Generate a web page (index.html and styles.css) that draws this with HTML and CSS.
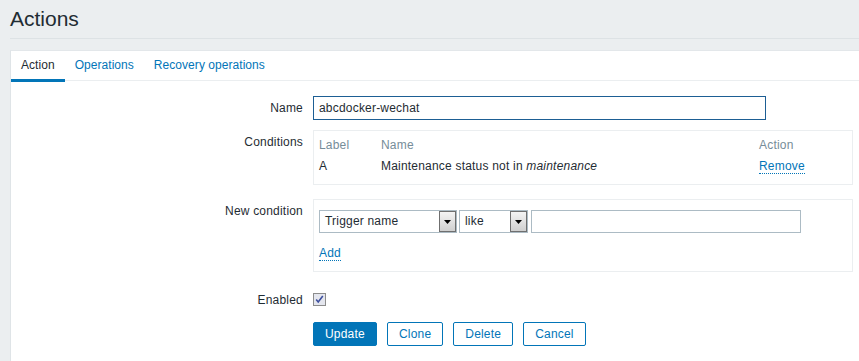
FILE: index.html
```html
<!DOCTYPE html>
<html>
<head>
<meta charset="utf-8">
<link rel="stylesheet" href="styles.css">
</head>
<body>
<header class="header"><h1 class="title">Actions</h1></header>
<main class="panel">
  <nav class="tabs">
    <span class="tab tab-active">Action</span>
    <span class="tab">Operations</span>
    <span class="tab">Recovery operations</span>
  </nav>
  <form class="form">
    <div class="row row-name">
      <label class="label">Name</label>
      <div class="field"><div class="text-input text-input-focus">abcdocker-wechat</div></div>
    </div>
    <div class="row row-cond">
      <label class="label">Conditions</label>
      <div class="field">
        <div class="box box-cond">
          <div class="cond-head">
            <span class="c-label">Label</span><span class="c-name">Name</span><span class="c-action">Action</span>
          </div>
          <div class="cond-row">
            <span class="c-label">A</span><span class="c-name">Maintenance status not in <em>maintenance</em></span><span class="c-action"><span class="link">Remove</span></span>
          </div>
        </div>
      </div>
    </div>
    <div class="row row-new">
      <label class="label">New condition</label>
      <div class="field">
        <div class="box box-new">
          <div class="new-line">
            <div class="select select-trigger"><span class="select-text">Trigger name</span><span class="select-btn"><svg width="7" height="4" viewBox="0 0 7 4"><path d="M0 0h7L3.5 4z" fill="#000"/></svg></span></div>
            <div class="select select-like"><span class="select-text">like</span><span class="select-btn"><svg width="7" height="4" viewBox="0 0 7 4"><path d="M0 0h7L3.5 4z" fill="#000"/></svg></span></div>
            <div class="text-input text-input-value"></div>
          </div>
          <div class="add-line"><span class="link">Add</span></div>
        </div>
      </div>
    </div>
    <div class="row row-enabled">
      <label class="label">Enabled</label>
      <div class="field">
        <span class="checkbox"><svg width="13" height="13" viewBox="0 0 13 13"><rect x="0.5" y="0.5" width="12" height="12" fill="#e4e6ee" stroke="#8c8c8c"/><path d="M3.2 6.6l2 2.4 4.6-6" fill="none" stroke="#3d4f9e" stroke-width="1.6"/></svg></span>
      </div>
    </div>
    <div class="row row-buttons">
      <span class="label"></span>
      <div class="field buttons">
        <span class="btn btn-primary">Update</span>
        <span class="btn">Clone</span>
        <span class="btn">Delete</span>
        <span class="btn">Cancel</span>
      </div>
    </div>
  </form>
</main>
</body>
</html>
```
FILE: styles.css
```css
html, body { margin: 0; padding: 0; }
body {
  background: #ebeef0;
  font-family: "Liberation Sans", Arial, sans-serif;
  font-size: 12px;
  letter-spacing: 0.2px;
  color: #1f2c33;
  overflow: hidden;
}
.header {
  margin-left: 10px;
  height: 38px;
  border-bottom: 1px solid #dde2e5;
}
.title {
  margin: 0;
  padding-top: 7px;
  font-size: 21px;
  font-weight: normal;
  letter-spacing: 0;
  line-height: 24px;
  color: #1f2c33;
}
.panel {
  margin-top: 11px;
  margin-left: 10px;
  background: #fff;
  border-left: 1px solid #dfe4e7;
  border-top: 1px solid #e3e7ea;
  min-height: 320px;
}
.tabs {
  display: flex;
  border-bottom: 1px solid #ebeef0;
  height: 29px;
  letter-spacing: 0.05px;
}
.tab {
  padding: 0 10px;
  height: 28px;
  line-height: 28px;
  color: #0275b8;
  border-bottom: 3px solid transparent;
  margin-bottom: -2px;
}
.tab-active {
  color: #1f2c33;
  border-bottom-color: #0275b8;
}
.form { padding-top: 15px; }
.row {
  display: grid;
  grid-template-columns: 292px 1fr;
  column-gap: 10px;
}
.label {
  text-align: right;
  line-height: 24px;
}
.row-name { height: 24px; }
.row-cond { margin-top: 10px; }
.row-new { margin-top: 14px; }
.row-enabled { margin-top: 16px; height: 24px; }
.row-buttons { margin-top: 10px; }
.field { min-width: 0; }
.text-input {
  box-sizing: border-box;
  height: 24px;
  line-height: 22px;
  border: 1px solid #acbbc4;
  padding: 0 5px;
  background: #fff;
}
.text-input-focus {
  width: 453px;
  border-color: #1d5e94;
}
.box {
  box-sizing: border-box;
  border: 1px solid #ebeef0;
  width: 540px;
}
.box-cond {
  padding: 4px 5px 7px;
}
.cond-head, .cond-row { display: flex; }
.cond-head { height: 20px; line-height: 20px; color: #768d99; }
.cond-row { height: 22px; line-height: 22px; }
.c-label { width: 62px; }
.c-name { width: 378px; }
.c-action { flex: 1; }
.link {
  color: #0275b8;
  border-bottom: 1px dotted #0275b8;
}
.box-new {
  padding: 10px 5px 0;
  height: 73px;
}
.new-line { display: flex; height: 24px; }
.select {
  box-sizing: border-box;
  height: 23px;
  border: 1px solid #acbbc4;
  display: flex;
  justify-content: space-between;
  align-items: stretch;
  padding: 0 0 0 5px;
  background: #fff;
}
.select-trigger { width: 138px; margin-right: 2px; }
.select-like { width: 69px; margin-right: 3px; }
.select-text { line-height: 21px; }
.select-btn {
  box-sizing: border-box;
  width: 17px;
  border: 1px solid #6f6f6f;
  background: linear-gradient(#f4f4f4, #cfcfcf);
  display: flex;
  align-items: center;
  justify-content: center;
}
.text-input-value {
  width: 270px;
  height: 23px;
}
.add-line {
  margin-top: 12px;
  line-height: 14px;
}
.checkbox {
  display: inline-block;
  margin-top: 5px;
  height: 13px;
}
.checkbox svg { display: block; }
.buttons { display: flex; gap: 10px; }
.btn {
  box-sizing: border-box;
  height: 24px;
  line-height: 22px;
  padding: 0 11px;
  border: 1px solid #0275b8;
  border-radius: 2px;
  color: #0275b8;
  background: #fff;
}
.btn-primary {
  background: #0275b8;
  color: #fff;
}
```
